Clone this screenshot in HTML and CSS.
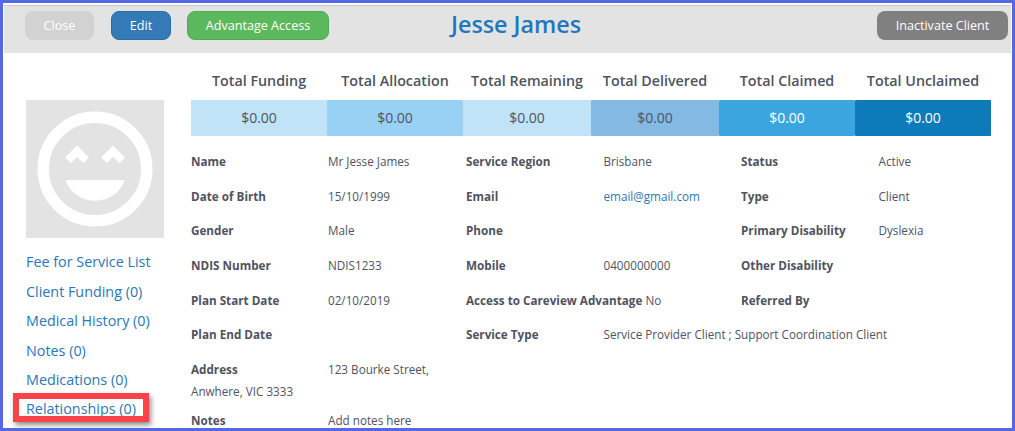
FILE: index.html
```html
<!DOCTYPE html>
<html lang="en">
<head>
<meta charset="utf-8">
<title>Jesse James</title>
<link rel="stylesheet" href="styles.css">
</head>
<body>
<div class="frame">
  <header class="topbar">
    <div class="actions">
      <button class="btn btn-close">Close</button>
      <button class="btn btn-edit">Edit</button>
      <button class="btn btn-access">Advantage Access</button>
    </div>
    <h1 class="title">Jesse James</h1>
    <button class="btn btn-inactivate">Inactivate Client</button>
  </header>
  <div class="body">
    <aside class="side">
      <div class="avatar">
        <svg width="138" height="138" viewBox="0 0 138 138">
          <rect width="138" height="138" rx="1" fill="#e3e3e3"/>
          <circle cx="69" cy="69" r="51.75" fill="none" stroke="#fff" stroke-width="11.5"/>
          <path d="M39 57.500 L51 45.500 L63 57.500 L57.500 63 L51 57 L45 63 Z" fill="#fff"/>
          <path d="M75 57.500 L87 45.500 L99 57.500 L93.500 63 L87 57 L81 63 Z" fill="#fff"/>
          <path d="M39.500 80 H98.500 C95 92 83 100.700 69 100.700 C55 100.700 43 92 39.500 80 Z" fill="#fff"/>
        </svg>
      </div>
      <nav class="links">
        <a class="link">Fee for Service List</a>
        <a class="link">Client Funding (0)</a>
        <a class="link">Medical History (0)</a>
        <a class="link">Notes (0)</a>
        <a class="link">Medications (0)</a>
        <a class="link link-marked">Relationships (0)</a>
      </nav>
    </aside>
    <main class="content">
      <div class="totals">
        <div class="total wide"><div class="total-head">Total Funding</div><div class="total-val c1">$0.00</div></div>
        <div class="total wide"><div class="total-head">Total Allocation</div><div class="total-val c2">$0.00</div></div>
        <div class="total narrow"><div class="total-head">Total Remaining</div><div class="total-val c1">$0.00</div></div>
        <div class="total narrow"><div class="total-head">Total Delivered</div><div class="total-val c3">$0.00</div></div>
        <div class="total wide"><div class="total-head">Total Claimed</div><div class="total-val c4">$0.00</div></div>
        <div class="total wide"><div class="total-head">Total Unclaimed</div><div class="total-val c5">$0.00</div></div>
      </div>
      <div class="details">
        <div class="row"><b>Name</b><span>Mr Jesse James</span><b>Service Region</b><span>Brisbane</span><b>Status</b><span>Active</span></div>
        <div class="row"><b>Date of Birth</b><span>15/10/1999</span><b>Email</b><a class="mail">email@gmail.com</a><b>Type</b><span>Client</span></div>
        <div class="row"><b>Gender</b><span>Male</span><b>Phone</b><span></span><b>Primary Disability</b><span>Dyslexia</span></div>
        <div class="row"><b>NDIS Number</b><span>NDIS1233</span><b>Mobile</b><span>0400000000</span><b>Other Disability</b><span></span></div>
        <div class="row"><b>Plan Start Date</b><span>02/10/2019</span><div class="span2"><b>Access to Careview Advantage</b> <span>No</span></div><b>Referred By</b><span></span></div>
        <div class="row"><b>Plan End Date</b><span></span><b>Service Type</b><span class="span3">Service Provider Client ; Support Coordination Client</span></div>
        <div class="row row-address"><b>Address</b><span>123 Bourke Street,</span></div>
        <div class="address-line">Anwhere, VIC 3333</div>
        <div class="row row-notes"><b>Notes</b><span>Add notes here</span></div>
      </div>
    </main>
  </div>
</div>
</body>
</html>
```
FILE: styles.css
```css
*, *::before, *::after { box-sizing: border-box; }
html, body { margin: 0; padding: 0; background: #fff; }
body { font-family: "Open Sans", sans-serif; color: #50535f; overflow: hidden; }

.frame {
  width: 1015px;
  height: 431px;
  overflow: hidden;
  position: relative;
  border: 3px solid #5468e4;
  padding: 2px 1px 0 1px;
  background: #fff;
}

.topbar {
  height: 48px;
  background: #e3e3e3;
  border-top: 1px solid #c9c9c9;
  display: flex;
  align-items: flex-start;
  padding: 5px 3px 0 21px;
  position: relative;
}
.actions { display: flex; }
.btn {
  height: 29px;
  border: 1px solid transparent;
  border-radius: 8px;
  color: #fff;
  font: 400 12.600px/1 "Open Sans", sans-serif;
  padding: 1px 0 0;
}
.btn-close { width: 69px; background: #d2d2d2; margin-right: 17px; }
.btn-edit { width: 60px; background: #337ab7; border-color: #2e6da4; margin-right: 16px; }
.btn-access { width: 142px; background: #5cb85c; border-color: #4cae4c; }
.btn-inactivate { width: 131px; background: #808080; margin-left: auto; }
.title {
  margin: 0;
  position: absolute;
  left: 447px;
  top: 2px;
  font: 600 23.300px/33px "Open Sans", sans-serif;
  color: #1f77bd;
}

.body { display: flex; }
.side { width: 187px; padding: 47px 0 0 22px; flex: none; }
.avatar { width: 138px; height: 138px; }
.avatar svg { display: block; }
.links { display: flex; flex-direction: column; margin-top: 9.300px; }
.link {
  font-size: 14.350px;
  line-height: 29.400px;
  color: #2a78b8;
  white-space: nowrap;
  position: relative;
}
.link-marked::after {
  content: "";
  position: absolute;
  left: -13px;
  top: -1.300px;
  width: 136px;
  height: 29px;
  border: 6px solid #f9424a;
  box-shadow: 2px 3px 5px rgba(0, 0, 0, .45);
}

.content { width: 800px; padding-top: 18px; flex: none; }
.totals { display: flex; }
.total { flex: none; }
.wide { width: 136px; }
.narrow { width: 128px; }
.total-head {
  font-size: 14.300px;
  font-weight: 600;
  line-height: 19px;
  text-align: center;
  white-space: nowrap;
  margin-bottom: 10px;
}
.total-val {
  height: 36px;
  font-size: 14px;
  line-height: 36px;
  text-align: center;
  border-radius: 1px;
}
.c1 { background: #c0e3f7; }
.c2 { background: #99d1f4; }
.c3 { background: #84b9e3; }
.c4 { background: #3ba5df; color: #fff; }
.c5 { background: #0d7bba; color: #fff; }

.details { padding-top: 17.200px; font-size: 11.700px; line-height: 17px; }
.row {
  display: grid;
  grid-template-columns: 137px 138px 137.500px 137.500px 137.500px 1fr;
  height: 34.600px;
  white-space: nowrap;
}
.row b { font-weight: 700; }
.span2 { grid-column: span 2; }
.span3 { grid-column: span 3; }
.mail { color: #2a78b8; }
.row-address { height: 22px; }
.address-line { height: 29.500px; }
```
